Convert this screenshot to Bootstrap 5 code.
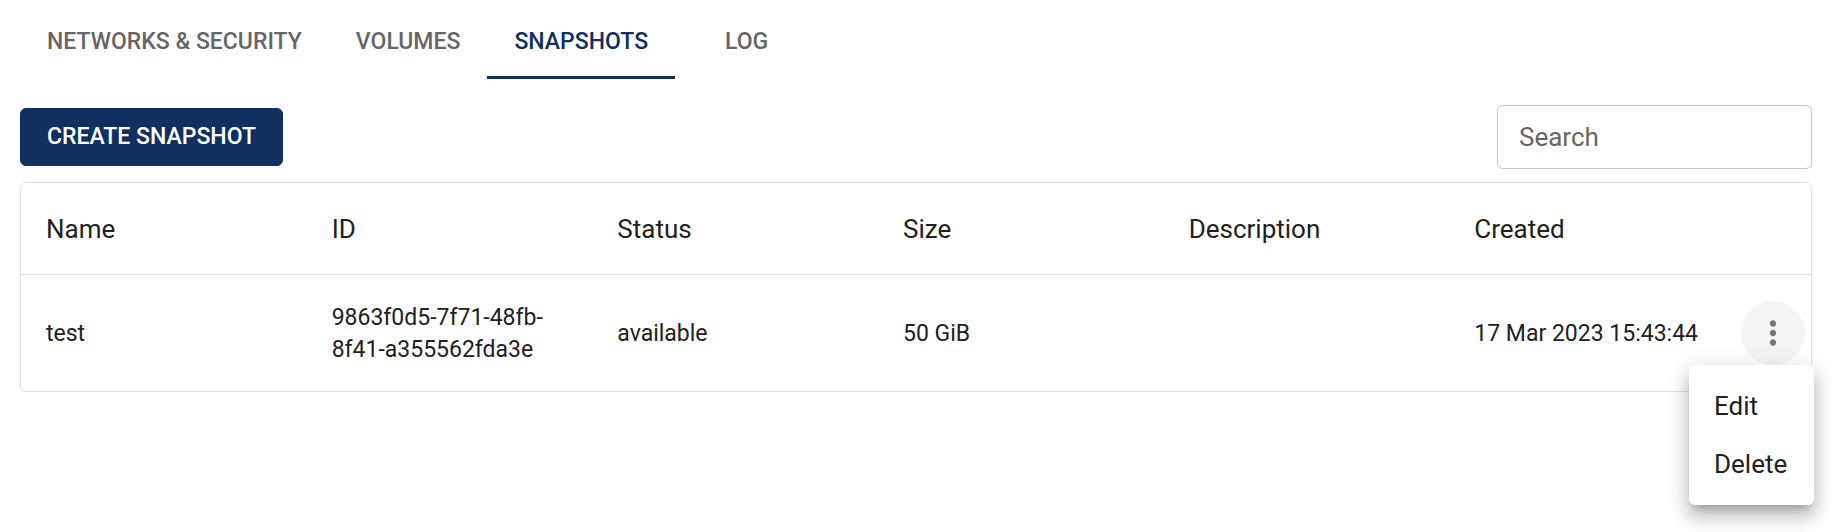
<!DOCTYPE html>
<html lang="en">
<head>
<meta charset="utf-8">
<meta name="viewport" content="width=device-width, initial-scale=1">
<title>Snapshots</title>
<link href="https://cdn.jsdelivr.net/npm/bootstrap@5.3.0/dist/css/bootstrap.min.css" rel="stylesheet">
<style>
  :root { --navy: #112f5f; --ink: #212121; --muted: #666; --line: #e0e0e0; }
  body { font-family: Roboto, sans-serif; font-size: 23px; line-height: 32px; color: var(--ink); }
  .page { padding: 3px 20px 0; }
  .tab-strip .nav-link {
    min-width: 143px; padding: 23px 27px 18px; border: 0; border-bottom: 3px solid transparent; border-radius: 0;
    color: var(--muted); font-weight: 500; text-transform: uppercase; text-align: center;
  }
  .tab-strip .nav-link.active { color: var(--navy); border-bottom-color: var(--navy); }
  .toolbar { padding: 26px 0 13px; }
  .btn-create {
    --bs-btn-color: #fff; --bs-btn-bg: var(--navy); --bs-btn-border-color: var(--navy);
    --bs-btn-hover-color: #fff; --bs-btn-hover-bg: #0b2147; --bs-btn-hover-border-color: #0b2147;
    --bs-btn-padding-x: 26px; --bs-btn-padding-y: 12px; --bs-btn-font-size: 23px;
    --bs-btn-font-weight: 500; --bs-btn-line-height: 32px; --bs-btn-border-radius: 6px;
    text-transform: uppercase;
  }
  .search-box { width: 315px; height: 64px; padding: 0 21px; font-size: 26px; border: 1px solid #c4c4c4; border-radius: 6px; color: var(--ink); }
  .search-box::placeholder { color: var(--muted); }
  .panel { border: 1px solid var(--line); border-radius: 6px; }
  .snap-table { table-layout: fixed; color: var(--ink); --bs-table-bg: transparent; --bs-table-color: var(--ink); }
  .snap-table > :not(caption) > * > * { padding: 27px 25px 25px; border-bottom: 0; }
  .snap-table > thead > tr > th { padding-top: 26px; font-size: 26px; line-height: 40px; font-weight: 400; border-bottom: 1px solid var(--line); }
  .snap-table > tbody > tr > td.act { padding: 0 6px; }
  .act-col { width: 76px; }
  .dots { width: 64px; height: 64px; border: 0; background: #f4f4f4; color: #757575; }
  .row-menu {
    display: block; top: 100%; right: -9px; min-width: 125px; padding: 12px 0; border: 0; border-radius: 6px;
    font-size: 26px; color: var(--ink);
    box-shadow: 0 8px 8px -5px rgba(0,0,0,.2), 0 13px 16px 2px rgba(0,0,0,.14), 0 5px 22px 3px rgba(0,0,0,.12);
  }
  .row-menu .dropdown-item { padding: 13px 25px; color: var(--ink); }
</style>
</head>
<body>
<main class="page min-vh-100">
  <ul class="nav tab-strip" role="tablist">
    <li class="nav-item" role="presentation"><button class="nav-link bg-transparent" type="button" role="tab">Networks &amp; Security</button></li>
    <li class="nav-item" role="presentation"><button class="nav-link bg-transparent" type="button" role="tab">Volumes</button></li>
    <li class="nav-item" role="presentation"><button class="nav-link bg-transparent active" type="button" role="tab" aria-selected="true">Snapshots</button></li>
    <li class="nav-item" role="presentation"><button class="nav-link bg-transparent" type="button" role="tab">Log</button></li>
  </ul>

  <div class="toolbar d-flex justify-content-between align-items-center">
    <button class="btn btn-create" type="button">Create snapshot</button>
    <input class="search-box" type="search" placeholder="Search" aria-label="Search">
  </div>

  <div class="panel">
    <table class="table snap-table align-middle mb-0">
      <colgroup><col><col><col><col><col><col><col class="act-col"></colgroup>
      <thead>
        <tr>
          <th scope="col">Name</th><th scope="col">ID</th><th scope="col">Status</th><th scope="col">Size</th>
          <th scope="col">Description</th><th scope="col">Created</th><th></th>
        </tr>
      </thead>
      <tbody>
        <tr>
          <td>test</td>
          <td>9863f0d5-7f71-48fb-8f41-a355562fda3e</td>
          <td>available</td>
          <td>50 GiB</td>
          <td></td>
          <td class="text-nowrap">17 Mar 2023 15:43:44</td>
          <td class="act">
            <div class="dropdown">
              <button class="dots rounded-circle d-flex align-items-center justify-content-center p-0" type="button" aria-label="Actions" aria-expanded="true">
                <svg width="38" height="38" viewBox="0 0 24 24" fill="currentColor" aria-hidden="true"><path d="M12 8c1.100 0 2-.9 2-2s-.9-2-2-2-2 .9-2 2 .9 2 2 2zm0 2c-1.100 0-2 .9-2 2s.9 2 2 2 2-.9 2-2-.9-2-2-2zm0 6c-1.100 0-2 .9-2 2s.9 2 2 2 2-.9 2-2-.9-2-2-2z"/></svg>
              </button>
              <ul class="dropdown-menu row-menu">
                <li><button class="dropdown-item" type="button">Edit</button></li>
                <li><button class="dropdown-item" type="button">Delete</button></li>
              </ul>
            </div>
          </td>
        </tr>
      </tbody>
    </table>
  </div>
</main>
<script src="https://cdn.jsdelivr.net/npm/bootstrap@5.3.0/dist/js/bootstrap.bundle.min.js"></script>
</body>
</html>
